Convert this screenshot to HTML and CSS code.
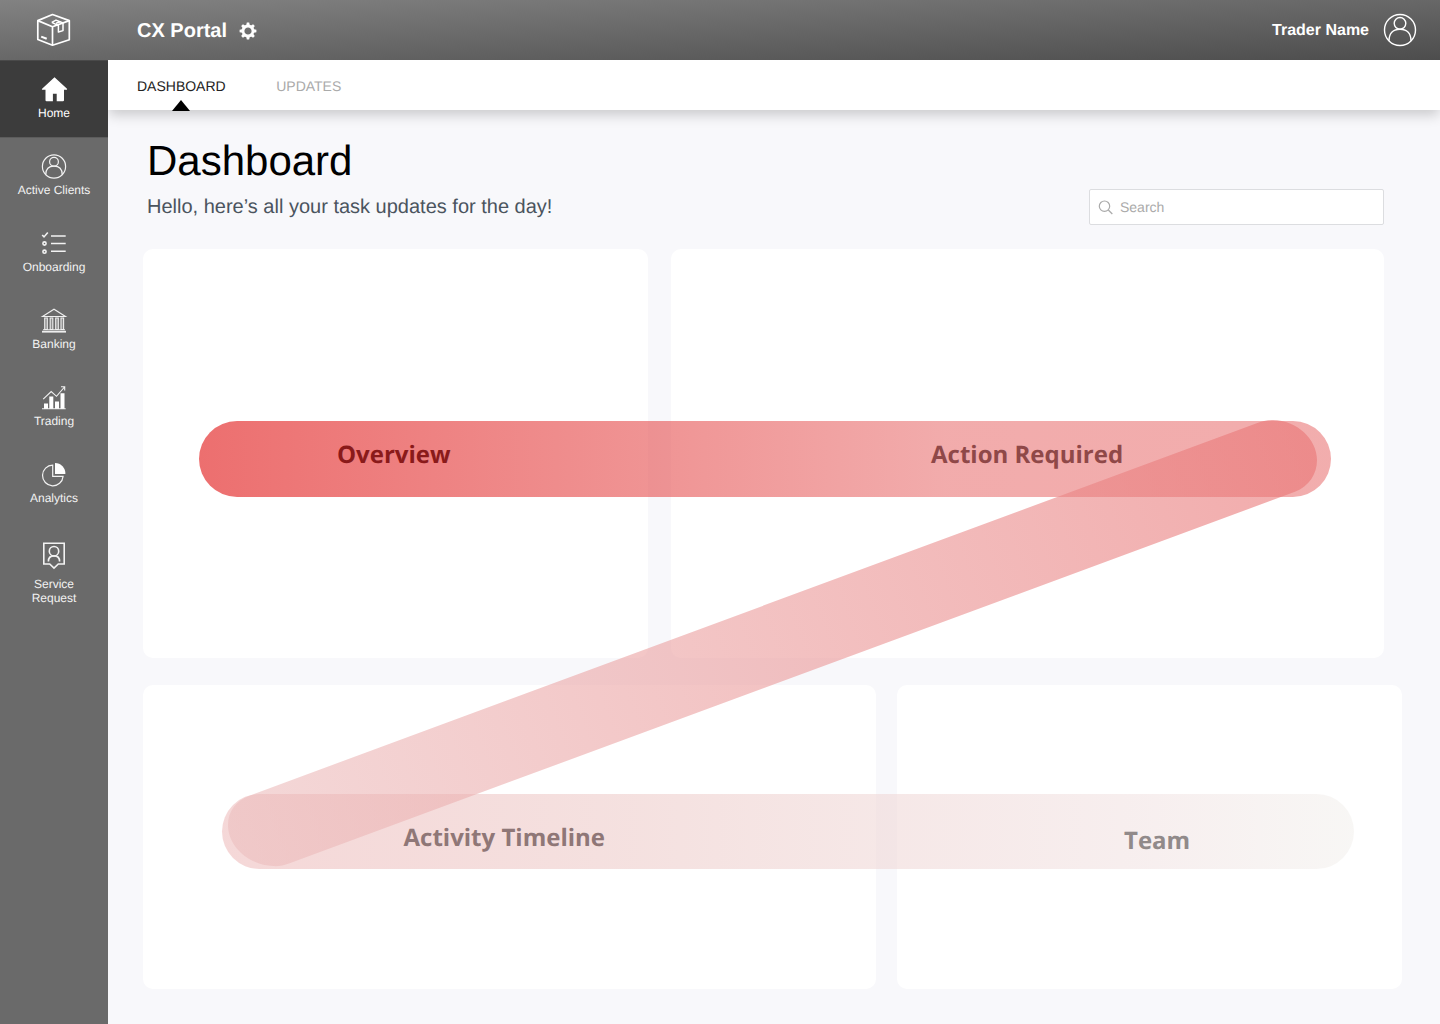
FILE: index.html
```html
<!DOCTYPE html>
<html lang="en">
<head>
<meta charset="utf-8">
<title>CX Portal</title>
<link rel="stylesheet" href="styles.css">
</head>
<body>
<div class="app">
  <header class="topbar">
    <div class="logo">
      <svg width="36" height="34" viewBox="0 0 36 34" fill="none" stroke="#fff" stroke-width="1.7" stroke-linejoin="round">
        <path d="M16.500 1.500 33.300 7.600V26.800L16.500 32.200 1.800 26.500V7.600Z"/>
        <path d="M1.800 7.600 16.500 13.700 33.300 7.600M16.500 13.700V32"/>
        <path d="M15.800 9.300 20 7.100 27 10V17.600L22.400 19V12.600L15.800 9.300M20 10.200 24.500 8.700" stroke-width="1.500"/>
        <path d="M5.200 23.600 10.700 25.800" stroke-width="2"/>
      </svg>
    </div>
    <div class="brand">CX Portal</div>
    <svg class="gear" width="18" height="18" viewBox="-9 -9 18 18">
      <circle r="5" fill="none" stroke="#fff" stroke-width="2.800"/>
      <g fill="#fff">
        <path id="tooth" d="M-1.800-5.600-1.200-8.400H1.200L1.800-5.600Z"/>
        <use href="#tooth" transform="rotate(45)"/><use href="#tooth" transform="rotate(90)"/>
        <use href="#tooth" transform="rotate(135)"/><use href="#tooth" transform="rotate(180)"/>
        <use href="#tooth" transform="rotate(225)"/><use href="#tooth" transform="rotate(270)"/>
        <use href="#tooth" transform="rotate(315)"/>
      </g>
    </svg>
    <div class="user">Trader Name</div>
    <svg class="avatar" width="34" height="34" viewBox="0 0 34 34" fill="none" stroke="#fff" stroke-width="1.4">
      <circle cx="17" cy="17" r="15.5"/><circle cx="17" cy="10.3" r="5.8"/>
      <path d="M6 27.8C6 20 10.5 16.2 17 16.2S28 20 28 27.8"/>
    </svg>
  </header>
  <nav class="sidebar">
    <a class="item active">
      <svg width="28" height="28" viewBox="0 0 28 28" fill="#fff"><path d="M14.500 1.300 27 12.700C27.300 13.200 27 13.700 26.500 13.700H24V24.200Q24 25.300 22.900 25.300H16.700V17.800H12.900V25.300H6.600Q5.500 25.300 5.500 24.200V13.700H2.500C1.900 13.700 1.700 13.200 2.100 12.700Z"/></svg>
      <span>Home</span>
    </a>
    <a class="item">
      <svg width="28" height="28" viewBox="0 0 28 28" fill="none" stroke="#f2f2f2" stroke-width="1.2"><circle cx="14" cy="13.5" r="11.6"/><circle cx="14" cy="8.7" r="4.4"/><path d="M5.800 21.500C5.800 16 9 13.100 14 13.100S22.200 16 22.200 21.500"/></svg>
      <span>Active Clients</span>
    </a>
    <a class="item">
      <svg width="28" height="28" viewBox="0 0 28 28" fill="none" stroke="#f2f2f2" stroke-width="1.600"><path d="M2.200 5 4 6.900 7.800 2.400M11 6H25.700M11 13.500H25.700M11 21.200H25.700"/><circle cx="4.500" cy="13.500" r="1.600"/><circle cx="4.500" cy="21.700" r="1.600"/></svg>
      <span>Onboarding</span>
    </a>
    <a class="item">
      <svg width="28" height="28" viewBox="0 0 28 28" fill="none" stroke="#eee" stroke-width="1.100"><path d="M2.500 9.500 14 2.200 25.500 9.500ZM3 22.700H25"/><path d="M4.700 11H7.300V22.500H4.700ZM10.200 11H12.800V22.500H10.200ZM15.700 11H18.300V22.500H15.700ZM21 11H23.600V22.500H21Z" fill="#fff" fill-opacity=".25"/><path d="M2 24.700H26" stroke-width="1.800"/></svg>
      <span>Banking</span>
    </a>
    <a class="item">
      <svg width="28" height="28" viewBox="0 0 28 28" fill="#fff"><path d="M4 19.500H8V25H4ZM9.300 12.500H13.300V25H9.300ZM15 17.500H19V25H15ZM20.500 9.300H24.500V25H20.500Z"/><path d="M2 24.700H25.700M3.200 15.200 11.200 7.600 16.500 12.300 24.500 3M21 2.700H24.700V6.400" fill="none" stroke="#f2f2f2" stroke-width="1.100"/></svg>
      <span>Trading</span>
    </a>
    <a class="item">
      <svg width="28" height="28" viewBox="0 0 28 28" fill="none" stroke="#f2f2f2" stroke-width="1.200"><path d="M12.700 4.200A10.300 10.300 0 1 0 23.100 15.400H12.700Z"/><path d="M15 2.100A10.400 10.400 0 0 1 25.400 12.900H15Z" fill="#fff" stroke="none"/></svg>
      <span>Analytics</span>
    </a>
    <a class="item tall">
      <svg width="28" height="30" viewBox="0 0 28 30" fill="none" stroke="#f2f2f2" stroke-width="1.600"><path d="M3.800 3.200H24.200V24H18.300L14 28.100 9.700 24H3.800Z"/><circle cx="14" cy="11.200" r="4.700"/><path d="M8.400 21.500C8.400 18 10.500 15.900 14 15.900S19.600 18 19.600 21.500"/></svg>
      <span>Service<br>Request</span>
    </a>
  </nav>
  <div class="content">
    <div class="tabs">
      <a class="tab current">DASHBOARD</a>
      <a class="tab">UPDATES</a>
    </div>
    <main class="page">
      <div class="intro">
        <div>
          <h1>Dashboard</h1>
          <p>Hello, here’s all your task updates for the day!</p>
        </div>
        <label class="search">
          <svg width="15" height="15" viewBox="0 0 15 15" fill="none" stroke="#aaa" stroke-width="1.200"><circle cx="6.500" cy="6.200" r="5.200"/><path d="M10.300 10 14.300 14"/></svg>
          <span>Search</span>
        </label>
      </div>
      <div class="row upper">
        <section class="card"><h2 class="t-overview">Overview</h2></section>
        <section class="card"><h2 class="t-action">Action Required</h2></section>
      </div>
      <div class="row lower">
        <section class="card"><h2 class="t-timeline">Activity Timeline</h2></section>
        <section class="card"><h2 class="t-team">Team</h2></section>
      </div>
    </main>
  </div>
  <svg class="flow" width="1440" height="1024" viewBox="0 0 1440 1024">
    <defs>
      <linearGradient id="g1" gradientUnits="userSpaceOnUse" x1="199" y1="0" x2="1331" y2="0">
        <stop offset="0" stop-color="#e00f0f"/><stop offset=".66" stop-color="#e97474"/><stop offset="1" stop-color="#e97777"/>
      </linearGradient>
      <linearGradient id="g2" gradientUnits="userSpaceOnUse" x1="1317" y1="450" x2="240" y2="845">
        <stop offset="0" stop-color="#e97474"/><stop offset="1" stop-color="#ecbebe"/>
      </linearGradient>
      <linearGradient id="g3" gradientUnits="userSpaceOnUse" x1="222" y1="0" x2="1354" y2="0">
        <stop offset="0" stop-color="#eebdbd"/><stop offset=".37" stop-color="#eecdcb"/><stop offset=".82" stop-color="#f2e4e4"/><stop offset="1" stop-color="#f3f1ee"/>
      </linearGradient>
    </defs>
    <g fill-opacity=".6">
      <rect x="199" y="421" width="1132" height="76" rx="38" fill="url(#g1)"/>
      <rect x="222" y="794" width="1132" height="75" rx="37.500" fill="url(#g3)"/>
      <path fill="url(#g2)" d="M250 795.400 1256 423.500C1262 421.300 1267 420 1273 420 1297 420.500 1317 439 1317 460 1317 474 1309 486.500 1295 491.800L289 863.500C284 865.500 278 866.500 273 866 248 865 228 846 228 825 228 811 236 800.500 250 795.400Z"/>
    </g>
  </svg>
</div>
</body>
</html>
```
FILE: styles.css
```css
* { box-sizing: border-box; }
body {
  margin: 0;
  font-family: "Liberation Sans", Arial, sans-serif;
  background: #f8f8fb;
  text-rendering: geometricPrecision;
}
.app {
  position: relative;
  width: 1440px;
  height: 1024px;
  display: grid;
  grid-template: 60px 1fr / 108px 1fr;
  overflow: hidden;
}
.topbar {
  grid-column: 1 / 3;
  display: flex;
  align-items: center;
  color: #fff;
  background: linear-gradient(to bottom right, #828282, #4d4d4d);
}
.logo { width: 137px; padding-left: 36px; display: flex; }
.brand { padding-top: 2px; font-size: 20px; font-weight: 700; width: 90px; white-space: nowrap; }
.gear { margin-left: 11.5px; margin-top: 1.5px; }
.user { margin-left: auto; padding-top: 2px; font-size: 16px; font-weight: 700; }
.avatar { margin: 0 23px 0 14px; }

.sidebar { background: #6a6a6a; display: flex; flex-direction: column; }
.item {
  height: 77px;
  padding-top: 16px;
  display: flex;
  flex-direction: column;
  align-items: center;
  gap: 2px;
  color: #f2f2f2;
  font-size: 12px;
  line-height: 14px;
  text-align: center;
}
.item.active {
  background: #3c3c3c;
  box-shadow: inset 0 1px #4a4a4a, 0 1px #5c5c5c;
  color: #fff;
}
.tall { height: 92px; padding-top: 18px; gap: 7px; }
.tall svg { flex: none; }

.content { display: flex; flex-direction: column; overflow: hidden; }
.tabs {
  height: 50px;
  flex: none;
  padding: 0 29px;
  display: flex;
  gap: 50.5px;
  background: #fff;
  box-shadow: 0 6px 12px -1px rgba(0, 0, 0, .19);
  font-size: 14px;
  line-height: 53px;
}
.tab { position: relative; height: 50px; color: #aaa; }
.current { color: #222; }
.current::after {
  content: "";
  position: absolute;
  left: 50%;
  bottom: -0.5px;
  margin-left: -9px;
  border: 9px solid transparent;
  border-top: 0;
  border-bottom: 11px solid #000;
}
.page { padding: 26px 38px 0 35px; }
.intro { height: 113px; display: flex; justify-content: space-between; padding: 0 18px 0 4px; }
h1 { margin: 0; font-size: 42px; font-weight: 400; line-height: 50px; color: #000; }
p { margin: 9px 0 0; font-size: 20px; line-height: 24px; color: #4b545e; }
.search {
  width: 295px;
  height: 36px;
  margin-top: 53px;
  padding-left: 8px;
  display: flex;
  align-items: center;
  gap: 7px;
  background: #fff;
  border: 1px solid #dcdde0;
  border-radius: 2px;
  font-size: 14px;
  color: #aaa;
}
.row { display: grid; }
.upper { grid-template-columns: 505px 713px; column-gap: 23px; height: 409px; margin-bottom: 27px; }
.lower { grid-template-columns: 733px 505px; column-gap: 21px; height: 304px; }
.card { background: #fff; border-radius: 10px; }
h2 {
  position: relative;
  z-index: 2;
  margin: 0;
  font-family: "Open Sans", "Noto Sans", sans-serif;
  font-size: 24px;
  font-weight: 700;
  line-height: 34px;
  white-space: nowrap;
}
.t-overview { padding: 189px 0 0 194px; color: #8a1a1a; }
.t-action { padding: 189px 0 0 260px; color: #8f4848; }
.t-timeline { padding: 136px 0 0 260.5px; color: #8f7777; }
.t-team { padding: 139px 0 0 227px; color: #918a8a; }
.flow { position: absolute; inset: 0; z-index: 1; pointer-events: none; }
```
